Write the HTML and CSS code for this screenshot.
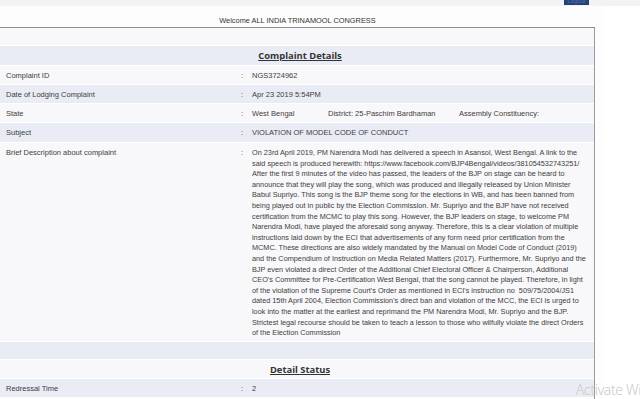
FILE: index.html
```html
<!DOCTYPE html>
<html>
<head>
<meta charset="utf-8">
<link rel="stylesheet" href="styles.css">
</head>
<body>
<div class="topbar"><span class="topbtn">Logout</span></div>
<div class="wrap">
  <div class="welcome">Welcome ALL INDIA TRINAMOOL CONGRESS</div>
  <div class="box">
    <div class="row white empty"></div>
    <div class="row blue head"><span class="title">Complaint Details</span></div>
    <div class="row white r19"><div class="lbl">Complaint ID</div><div class="col">:</div><div class="val">NGS3724962</div></div>
    <div class="row blue r19"><div class="lbl">Date of Lodging Complaint</div><div class="col">:</div><div class="val">Apr 23 2019 5:54PM</div></div>
    <div class="row white r19"><div class="lbl">State</div><div class="col">:</div><div class="val state"><span class="s1">West Bengal</span><span class="s2">District: 25-Paschim Bardhaman</span><span>Assembly Constituency:</span></div></div>
    <div class="row blue r20"><div class="lbl">Subject</div><div class="col">:</div><div class="val">VIOLATION OF MODEL CODE OF CONDUCT</div></div>
    <div class="row white brief"><div class="lbl">Brief Description about complaint</div><div class="col">:</div><div class="val desc">On 23rd April 2019, PM Narendra Modi has delivered a speech in Asansol, West Bengal. A link to the<br>said speech is produced herewith: https://www.facebook.com/BJP4Bengal/videos/381054532743251/<br>After the first 9 minutes of the video has passed, the leaders of the BJP on stage can be heard to<br>announce that they will play the song, which was produced and illegally released by Union Minister<br>Babul Supriyo. This song is the BJP theme song for the elections in WB, and has been banned from<br>being played out in public by the Election Commission. Mr. Supriyo and the BJP have not received<br>certification from the MCMC to play this song. However, the BJP leaders on stage, to welcome PM<br>Narendra Modi, have played the aforesaid song anyway. Therefore, this is a clear violation of multiple<br>instructions laid down by the ECI that advertisements of any form need prior certification from the<br>MCMC. These directions are also widely mandated by the Manual on Model Code of Conduct (2019)<br>and the Compendium of Instruction on Media Related Matters (2017). Furthermore, Mr. Supriyo and the<br>BJP even violated a direct Order of the Additional Chief Electoral Officer &amp; Chairperson, Additional<br>CEO's Committee for Pre-Certification West Bengal, that the song cannot be played. Therefore, in light<br>of the violation of the Supreme Court's Order as mentioned in ECI's instruction no &nbsp;509/75/2004/JS1<br>dated 15th April 2004, Election Commission's direct ban and violation of the MCC, the ECI is urged to<br>look into the matter at the earliest and reprimand the PM Narendra Modi, Mr. Supriyo and the BJP.<br>Strictest legal recourse should be taken to teach a lesson to those who wilfully violate the direct Orders<br>of the Election Commission</div></div>
    <div class="row blue empty"></div>
    <div class="row white head2"><span class="title">Detail Status</span></div>
    <div class="row blue r19"><div class="lbl">Redressal Time</div><div class="col">:</div><div class="val">2</div></div>
  </div>
</div>
<div class="activate">Activate Windows</div>
</body>
</html>
```
FILE: styles.css
```css
html, body {
  margin: 0;
  padding: 0;
  background: #ffffff;
  overflow: hidden;
  height: 399px;
}
body {
  font-family: "Liberation Sans", Arial, sans-serif;
  font-size: 7.5px;
  color: #3d3d3d;
  position: relative;
}
.topbar {
  height: 6px;
  background: #f3f3f3;
  display: flex;
  justify-content: flex-end;
  padding-right: 51px;
  overflow: hidden;
}
.topbtn {
  display: block;
  width: 25px;
  height: 5px;
  background: #24407c;
  color: #5a74aa;
  font-size: 6px;
  line-height: 3px;
  text-align: center;
  overflow: hidden;
}
.wrap {
  width: 603px;
  background: #fdfdfd;
}
.welcome {
  height: 21px;
  box-sizing: border-box;
  padding-top: 10px;
  padding-right: 8px;
  text-align: center;
  font-size: 7.4px;
  line-height: 9px;
  color: #333;
}
.box {
  width: 595px;
  box-sizing: border-box;
  border-top: 1px solid #8c8c8c;
  border-right: 1px solid #9a9a9a;
  height: 372px;
}
.row {
  display: grid;
  grid-template-columns: 241px 11px 1fr;
  box-sizing: border-box;
  border-bottom: 1px solid #ffffff;
  align-items: center;
}
.white { background: #f8f8fa; }
.blue { background: #e9ecf5; }
.empty { height: 18px; }
.r19 { height: 19px; }
.r20 { height: 20px; }
.head {
  height: 20px;
  display: flex;
  justify-content: center;
  align-items: center;
  padding-left: 6px;
}
.head2 {
  height: 19px;
  display: flex;
  justify-content: center;
  align-items: center;
  padding-left: 6px;
}
.title {
  font-family: "Open Sans", sans-serif;
  font-weight: 700;
  font-size: 9.4px;
  text-decoration: underline;
  color: #333;
}
.lbl { padding-left: 6px; }
.state { display: flex; }
.s1 { width: 76px; }
.s2 { width: 131px; }
.brief {
  height: 199px;
  align-items: start;
  padding-top: 5px;
}
.desc {
  font-size: 7.3px;
  line-height: 10.6px;
  white-space: nowrap;
}
.activate {
  position: absolute;
  left: 576px;
  top: 380px;
  font-family: "Open Sans", sans-serif;
  font-weight: 300;
  font-size: 14px;
  letter-spacing: -0.3px;
  color: #c4c4c4;
  white-space: nowrap;
}
```
